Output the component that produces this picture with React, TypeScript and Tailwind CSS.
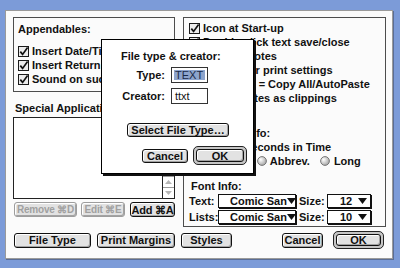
import React from "react";

// Mac OS 8 "Platinum" preferences dialog with a modal sheet on top

const Check = () => (
  <svg width="11" height="11" viewBox="0 0 11 11" className="shrink-0">
    <rect x="0.5" y="0.5" width="10" height="10" fill="#ececec" stroke="#1a1a1a" />
    <path d="M2.3 5.6 L4.6 8.4 L9.6 1.6" fill="none" stroke="#111" strokeWidth="1.7" />
  </svg>
);

const Radio = () => (
  <svg width="10" height="10" viewBox="0 0 10 10" className="shrink-0">
    <defs>
      <radialGradient id="rg" cx="35%" cy="35%" r="70%">
        <stop offset="0" stopColor="#ffffff" />
        <stop offset="1" stopColor="#a3a3a3" />
      </radialGradient>
    </defs>
    <circle cx="5" cy="5" r="4.4" fill="url(#rg)" stroke="#6b6b6b" strokeWidth="0.9" />
  </svg>
);

const Arrow = () => (
  <svg width="9" height="6" viewBox="0 0 9 6" className="shrink-0">
    <path d="M0 0 H9 L4.5 6 Z" fill="#111" />
  </svg>
);

const CheckRow = ({ children }: { children: React.ReactNode }) => (
  <div className="h-[14px] flex items-center gap-[3px] whitespace-nowrap">
    <Check />
    <span>{children}</span>
  </div>
);

const Btn = ({
  children,
  className = "",
  disabled = false,
}: {
  children: React.ReactNode;
  className?: string;
  disabled?: boolean;
}) => (
  <div
    className={`rounded-[3px] border flex items-center justify-center whitespace-nowrap overflow-hidden bg-[#e2e2e2] shadow-[inset_1px_1px_0_#ffffff,inset_-1px_-1px_0_#a3a3a3] ${
      disabled ? "border-[#9d9d9d] text-[#a0a0a0]" : "border-[#111] text-[#111]"
    } ${className}`}
  >
    {children}
  </div>
);

const DefaultBtn = ({ children, className = "" }: { children: React.ReactNode; className?: string }) => (
  <div className={`rounded-[5px] border border-[#222] bg-[#c6c6c6] p-[2px] flex ${className}`}>
    <Btn className="flex-1">{children}</Btn>
  </div>
);

const Popup = ({ text, className = "" }: { text: string; className?: string }) => (
  <div
    className={`h-[14px] border border-[#111] bg-white shadow-[1px_1px_0_#111] flex items-center pr-[3px] ${className}`}
  >
    <span className="flex-1 whitespace-nowrap">{text}</span>
    <Arrow />
  </div>
);

const App = () => {
  return (
    <div className="w-[400px] h-[268px] bg-[#7c9bd8] pt-[10px] pl-[5px] overflow-hidden font-['Liberation_Sans',Arial,sans-serif] text-[11px] font-bold leading-[14px] text-[#111]">
      {/* Window */}
      <div className="relative w-[388px] h-[249px] bg-[#fbfbfb] border border-[#9a9a9a] shadow-[1px_1px_0_#5a6d96] pl-[7px] pt-[6px] pr-[6px]">
        <div className="flex gap-[8px]">
          {/* Left column */}
          <div className="w-[162px] flex flex-col">
            <div className="h-[75px] border border-[#4d4d4d] pl-[4px] pt-[4px] overflow-hidden">
              <div className="h-[14px]">Appendables:</div>
              <div className="mt-[8px] flex flex-col">
                <CheckRow>Insert Date/Time</CheckRow>
                <CheckRow>Insert Return</CheckRow>
                <CheckRow>Sound on success</CheckRow>
              </div>
            </div>

            <div className="mt-[9px] h-[14px] pl-[2px] whitespace-nowrap">Special Applications:</div>

            <div className="mt-[2px] h-[82px] border border-[#222] bg-white flex">
              <div className="flex-1" />
              <div className="w-[12px] border-l border-[#222] flex flex-col justify-end">
                <div className="h-[11px] border-t border-[#9a9a9a] flex items-center justify-center">
                  <svg width="7" height="4" viewBox="0 0 7 4">
                    <path d="M0 4 H7 L3.5 0 Z" fill="#b5b5b5" />
                  </svg>
                </div>
                <div className="h-[11px] border-t border-[#9a9a9a] flex items-center justify-center">
                  <svg width="7" height="4" viewBox="0 0 7 4">
                    <path d="M0 0 H7 L3.5 4 Z" fill="#b5b5b5" />
                  </svg>
                </div>
              </div>
            </div>

            <div className="mt-[3px] h-[15px] flex pl-[1px]">
              <Btn disabled className="w-[63px] text-[10px] tracking-[-0.2px]">Remove ⌘D</Btn>
              <Btn disabled className="ml-[4px] w-[44px] text-[10px] tracking-[-0.2px]">Edit ⌘E</Btn>
              <Btn className="ml-[5px] w-[45px] tracking-[-0.2px]">Add ⌘A</Btn>
            </div>
          </div>

          {/* Right options box */}
          <div className="w-[203px] h-[210px] border border-[#4d4d4d] pl-[5px] pt-[3px] flex flex-col whitespace-nowrap">
            <CheckRow>Icon at Start-up</CheckRow>
            <CheckRow>Double-click text save/close</CheckRow>
            <CheckRow>Number notes</CheckRow>
            <CheckRow>Remember print settings</CheckRow>
            <CheckRow>Cmd-click = Copy All/AutoPaste</CheckRow>
            <CheckRow>Export notes as clippings</CheckRow>

            <div className="mt-[21px] h-[14px] pl-[2px]">Date/Time Info:</div>
            <CheckRow>Display seconds in Time</CheckRow>
            <div className="h-[14px] pl-[14px] flex items-center">
              <Radio />
              <span className="ml-[4px]">Short</span>
              <span className="ml-[11px]">
                <Radio />
              </span>
              <span className="ml-[3px]">Abbrev.</span>
              <span className="ml-[10px]">
                <Radio />
              </span>
              <span className="ml-[4px]">Long</span>
            </div>

            <div className="mt-[11px] h-[14px] pl-[2px]">Font Info:</div>
            <div className="mt-[1px] h-[15px] flex items-start">
              <span className="w-[29px] shrink-0">Text:</span>
              <Popup text="Comic San" className="w-[78px] shrink-0 pl-[11px]" />
              <span className="ml-[3px] w-[28px] shrink-0">Size:</span>
              <Popup text="12" className="w-[44px] shrink-0 pl-[12px]" />
            </div>
            <div className="mt-[1px] h-[15px] flex items-start">
              <span className="w-[29px] shrink-0">Lists:</span>
              <Popup text="Comic San" className="w-[78px] shrink-0 pl-[11px]" />
              <span className="ml-[3px] w-[28px] shrink-0">Size:</span>
              <Popup text="10" className="w-[44px] shrink-0 pl-[12px]" />
            </div>
          </div>
        </div>

        {/* Bottom buttons */}
        <div className="mt-[4px] h-[18px] flex items-center pl-[1px] pr-[2px]">
          <Btn className="w-[77px] h-[15px]">File Type</Btn>
          <Btn className="ml-[6px] w-[78px] h-[15px]">Print Margins</Btn>
          <Btn className="ml-[6px] w-[51px] h-[15px]">Styles</Btn>
          <Btn className="ml-auto w-[41px] h-[15px]">Cancel</Btn>
          <DefaultBtn className="ml-[10px] w-[51px] h-[18px]">OK</DefaultBtn>
        </div>

        {/* Modal: file type & creator */}
        <div className="absolute left-[95px] top-[28px] w-[153px] h-[135px] bg-white border border-black shadow-[2px_2px_0_#111] pt-[9px] flex flex-col">
          <div className="pl-[19px] h-[14px] whitespace-nowrap">File type &amp; creator:</div>
          <div className="mt-[4px] h-[16px] flex items-center">
            <span className="w-[63px] text-right">Type:</span>
            <div className="ml-[6px] w-[37px] h-[16px] border border-[#333] p-[2px]">
              <div className="h-full bg-[#8da4cc] text-[#1b2a48] font-normal leading-[10px] pl-[1px]">TEXT</div>
            </div>
          </div>
          <div className="mt-[5px] h-[16px] flex items-center">
            <span className="w-[63px] text-right">Creator:</span>
            <div className="ml-[6px] w-[37px] h-[16px] border border-[#333] pl-[3px] font-normal leading-[14px]">
              ttxt
            </div>
          </div>
          <Btn className="mt-[19px] ml-[25px] w-[102px] h-[14px]">Select File Type…</Btn>
          <div className="mt-[9px] flex items-center justify-end pr-[6px]">
            <Btn className="w-[46px] h-[14px]">Cancel</Btn>
            <DefaultBtn className="ml-[5px] w-[54px] h-[19px]">OK</DefaultBtn>
          </div>
        </div>
      </div>
    </div>
  );
};

export default App;
